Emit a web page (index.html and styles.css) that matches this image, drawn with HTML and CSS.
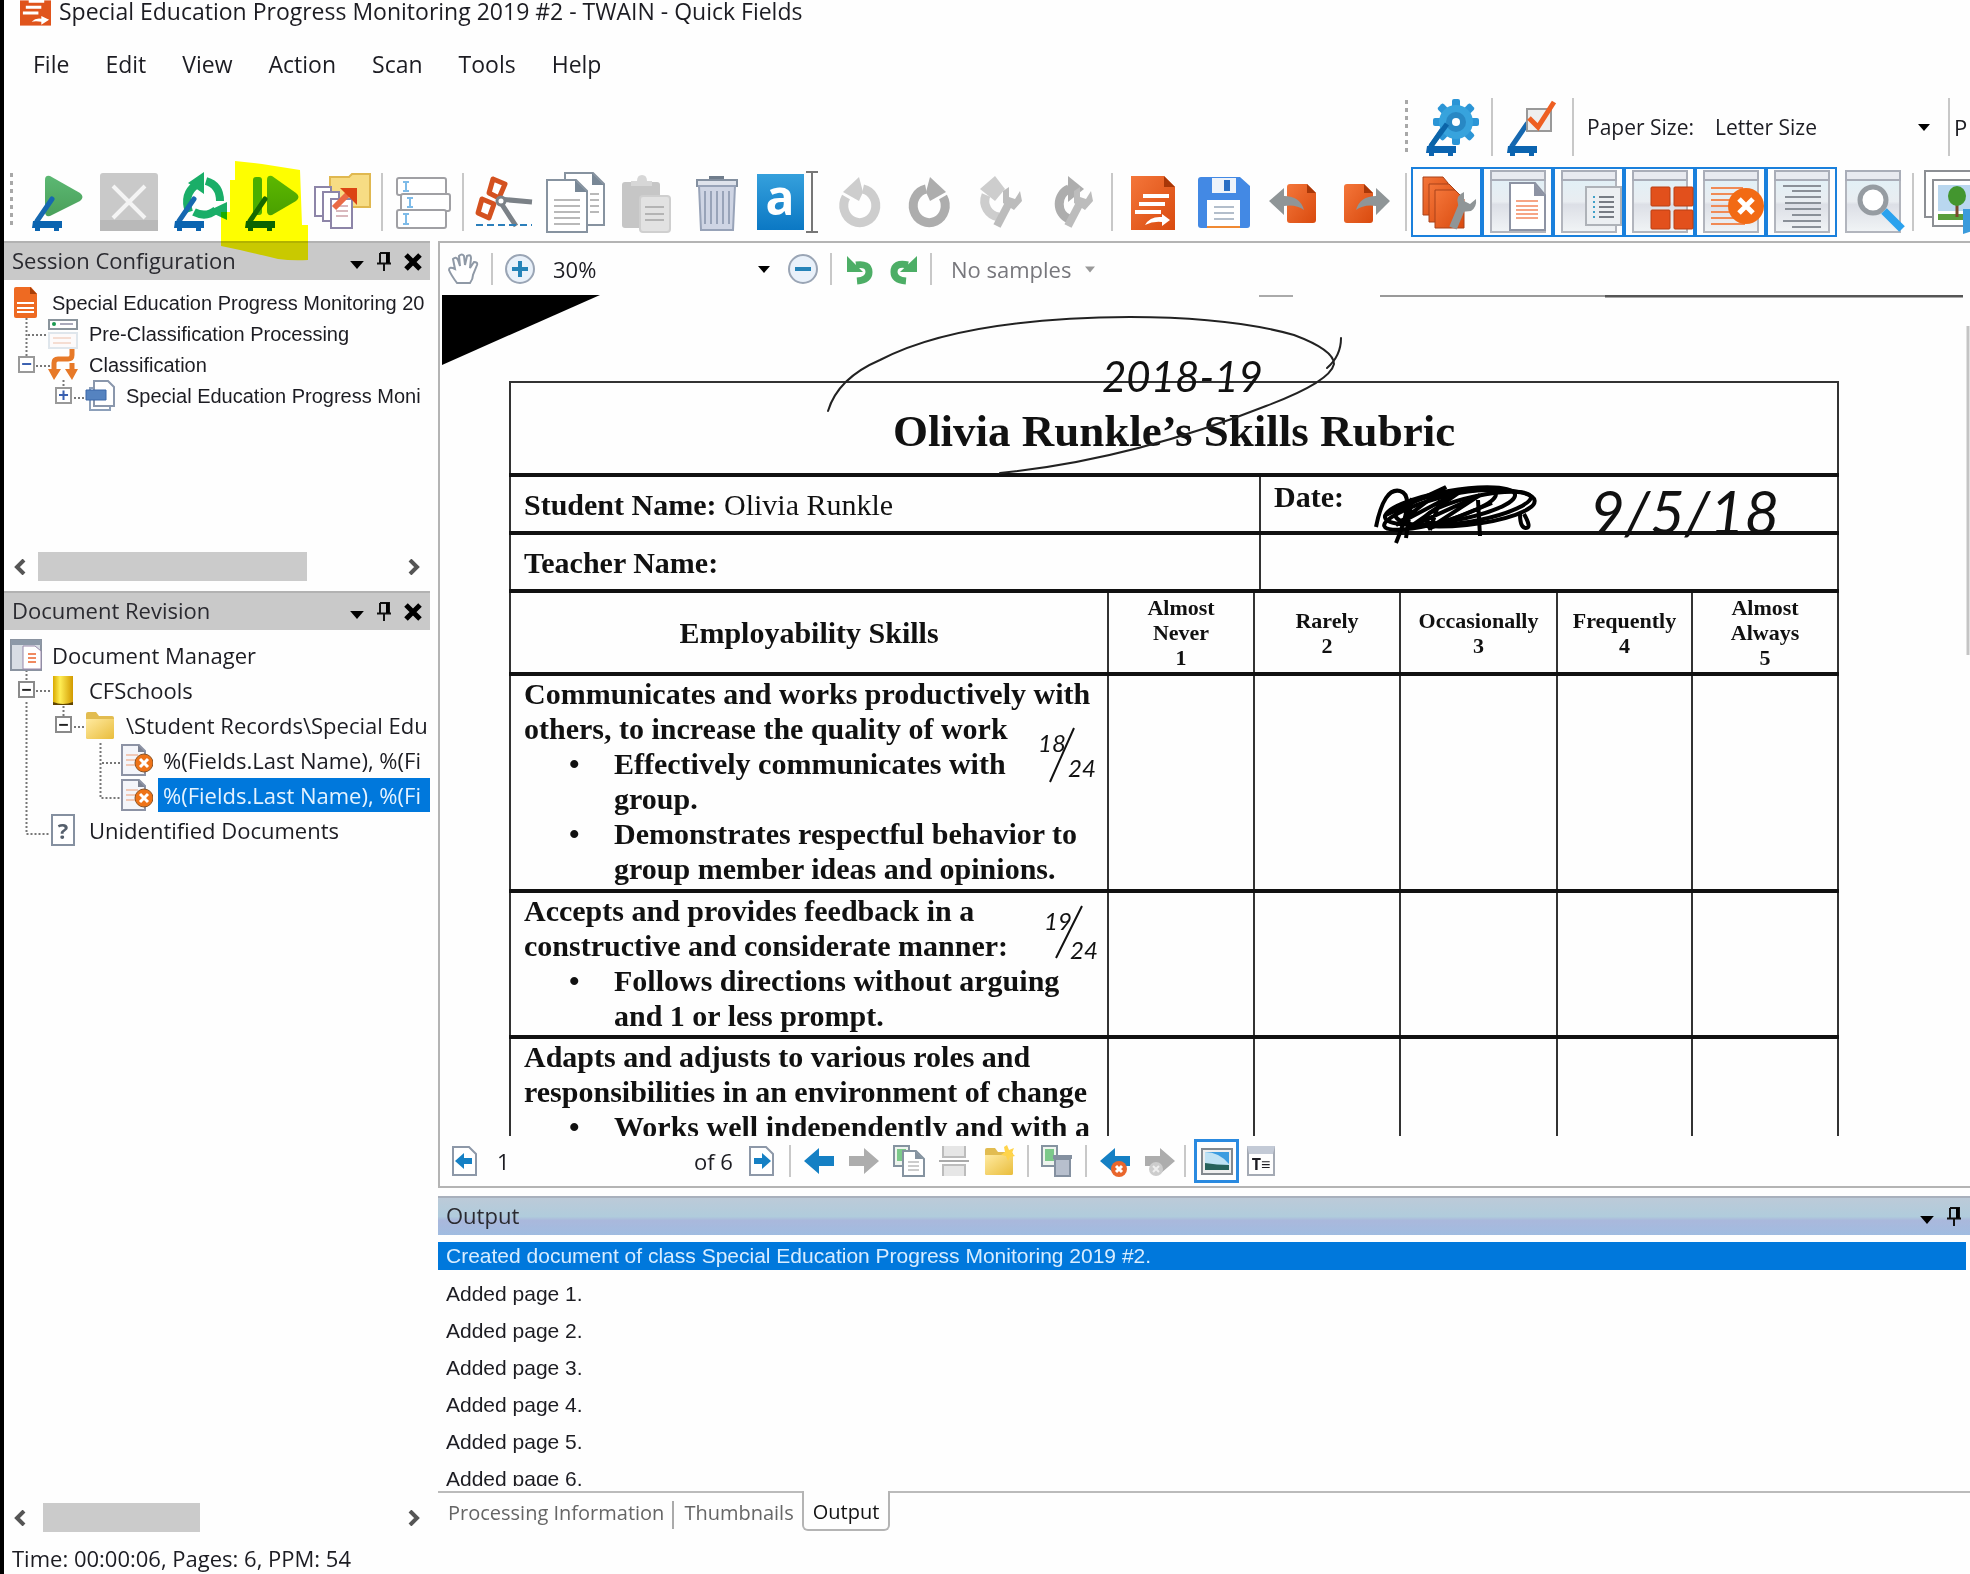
FILE: index.html
```html
<!DOCTYPE html>
<html lang="en">
<head>
<meta charset="utf-8">
<title>Special Education Progress Monitoring 2019 #2 - TWAIN - Quick Fields</title>
<link rel="stylesheet" href="styles.css">
</head>
<body>
<svg class="sprite" aria-hidden="true">
  <defs>
    <linearGradient id="gOrange" x1="0" y1="0" x2="1" y2="1"><stop offset="0" stop-color="#f4763a"/><stop offset="1" stop-color="#d94a0e"/></linearGradient>
    <linearGradient id="gPlay" x1="0" y1="0" x2="0" y2="1"><stop offset="0" stop-color="#5cb873"/><stop offset="1" stop-color="#4aa05a"/></linearGradient>
    <linearGradient id="gPane" x1="0" y1="0" x2="0" y2="1"><stop offset="0" stop-color="#dff1f8"/><stop offset=".5" stop-color="#e9edf1"/><stop offset=".55" stop-color="#dcdfe6"/><stop offset="1" stop-color="#f1f4f6"/></linearGradient>
    <linearGradient id="gFolder" x1="0" y1="0" x2="1" y2="1"><stop offset="0" stop-color="#ffeaa0"/><stop offset="1" stop-color="#e9bd3c"/></linearGradient>
    <linearGradient id="gGold" x1="0" y1="0" x2="1" y2="0"><stop offset="0" stop-color="#d9a900"/><stop offset=".35" stop-color="#ffee55"/><stop offset="1" stop-color="#d29a00"/></linearGradient>
  </defs>
  <symbol id="scanner" viewBox="0 0 60 60"><path d="M9 49 24 27" stroke="#1668b0" stroke-width="5" fill="none" stroke-linecap="round"/><path d="M5 49h29v7h-3v3h-5v-3H12v3H7v-3H4z" fill="#0b64b0"/></symbol>
  <symbol id="window" viewBox="0 0 60 66"><rect x="3" y="2" width="54" height="61" fill="url(#gPane)" stroke="#b2b5bd" stroke-width="2"/><rect x="3" y="2" width="54" height="9" fill="#e8eaf0" stroke="#a9adb8" stroke-width="2"/></symbol>
  <symbol id="caret" viewBox="0 0 12 7"><path d="M0 0h12L6 7z"/></symbol>
  <symbol id="pin" viewBox="0 0 16 20"><path d="M4 1h9v10M4 1v10M1 11.500h14M8 12v7" fill="none" stroke="#111" stroke-width="2"/><path d="M10 1h3v10h-3z"/></symbol>
  <symbol id="cross" viewBox="0 0 18 18"><path d="M2 2l14 14M16 2 2 16" stroke="#000" stroke-width="5"/></symbol>
  <symbol id="left" viewBox="0 0 12 16"><path d="M10 1 3 8l7 7" fill="none" stroke="#555" stroke-width="4"/></symbol>
  <symbol id="right" viewBox="0 0 12 16"><path d="M2 1l7 7-7 7" fill="none" stroke="#555" stroke-width="4"/></symbol>
  <symbol id="folder" viewBox="0 0 32 32"><path d="M2 5q0-2 2-2h8l3 4h13q2 0 2 2v19q0 2-2 2H4q-2 0-2-2z" fill="#e2bc50"/><path d="M2 10h28v18q0 2-2 2H4q-2 0-2-2z" fill="url(#gFolder)"/></symbol>
  <symbol id="rot" viewBox="0 0 60 60"><path d="M43 25a16 17 0 1 1-17-8" fill="none" stroke="currentColor" stroke-width="9"/><path d="M30 5 46 20 30 29 26 20z" fill="currentColor"/></symbol>
  <symbol id="baddoc" viewBox="0 0 32 32"><path d="M1 1h17l6 6v24H1z" fill="#f4f5fa" stroke="#8d93a5" stroke-width="2"/><path d="M17 1v7h7z" fill="#7c8292"/><path d="M5 11h12M5 16h10M5 21h9" stroke="#efb9a0" stroke-width="1.500"/><circle cx="23" cy="19" r="9" fill="#ee7318" stroke="#8c5424"/><path d="M19 15l8 8M27 15l-8 8" stroke="#fff" stroke-width="3"/></symbol>
  <symbol id="pages" viewBox="0 0 32 32"><path d="M1 1h15v20H1z" fill="#eef4ee" stroke="#8593a0" stroke-width="2"/><path d="M4 4h9v12H4z" fill="#7cc98a"/></symbol>
  <symbol id="bigleft" viewBox="0 0 32 32"><path d="M1 16 16 3v8h15v10H16v8z" fill="currentColor"/></symbol>
</svg>

<div class="app">
  <header class="titlebar">
    <svg class="logo" viewBox="0 0 32 26"><path d="M0 0h32v26H0z" fill="#e0541c"/><path d="M9 1h16M6 7h16M3 13h16" stroke="#fff" stroke-width="3"/><path d="M12 22q4-4 10-3v-3l8 4-8 5v-3q-6-1-10-0" fill="#fff"/></svg>
    <span>Special Education Progress Monitoring 2019 #2 - TWAIN - Quick Fields</span>
  </header>
  <nav class="menu">
    <button>File</button><button>Edit</button><button>View</button><button>Action</button><button>Scan</button><button>Tools</button><button>Help</button>
  </nav>

  <div class="bar bar-scan">
    <span class="grip"></span>
    <button class="tool" aria-label="Scanner settings"><svg viewBox="0 0 60 60"><use href="#scanner"/><g transform="translate(34 25)"><g fill="#2b95d6"><rect x="-4" y="-23" width="8" height="46" rx="2"/><rect x="-23" y="-4" width="46" height="8" rx="2"/><rect x="-4" y="-23" width="8" height="46" rx="2" transform="rotate(45)"/><rect x="-4" y="-23" width="8" height="46" rx="2" transform="rotate(-45)"/></g><circle r="17" fill="#37a3dd"/><circle r="10" fill="#2888c4"/><circle r="4" fill="#fff"/></g><path d="M9 49 25 27" stroke="#0b64a8" stroke-width="5"/></svg></button>
    <span class="sep"></span>
    <button class="tool" aria-label="Test scan"><svg viewBox="0 0 60 60"><use href="#scanner"/><path d="M24 12h24v22H24z" fill="#eee" stroke="#999" stroke-width="2"/><path d="M26 21l9 9L51 5" fill="none" stroke="#ee5f22" stroke-width="5"/></svg></button>
    <span class="sep"></span>
    <label class="paper-label" for="paper">Paper Size:</label>
    <span class="pick paper"><select id="paper"><option>Letter Size</option></select><svg class="caret"><use href="#caret"/></svg></span>
    <span class="sep"></span>
    <span>P</span>
  </div>

  <div class="bar bar-main">
    <span class="grip"></span>
    <button class="tool" aria-label="Start"><svg viewBox="0 0 60 60"><path d="M17 8q0-5 5-4l30 17q5 4 0 8L22 44q-5 1-5-4z" fill="url(#gPlay)"/><use href="#scanner"/></svg></button>
    <button class="tool" aria-label="Stop"><svg viewBox="0 0 60 60"><rect x="1" y="1" width="58" height="58" rx="3" fill="#c9c9c9"/><path d="M1 48h58v11H1z" fill="#b9b9b9"/><path d="M14 14l32 32M46 14 14 46" stroke="#f4f4f4" stroke-width="4"/></svg></button>
    <button class="tool" aria-label="Rescan"><svg viewBox="0 0 60 60"><g fill="none" stroke="#1aae68" stroke-width="8"><path d="M19 40q-6-18 7-27"/><path d="M36 9q14 4 14 20"/><path d="M24 40q12 6 22-2"/></g><path d="M18 11 34 0v22zM57 30v18l-19-9z" fill="#1aae68"/><use href="#scanner"/></svg></button>
    <button class="tool" aria-label="Scan more"><svg viewBox="0 0 60 60"><rect x="12" y="5" width="9" height="38" rx="3" fill="#4aae56"/><path d="M26 8q0-5 5-4l24 17q5 4 0 8L31 43q-5 1-5-4z" fill="url(#gPlay)"/><use href="#scanner"/></svg></button>
    <button class="tool" aria-label="Send documents"><svg viewBox="0 0 60 60"><path d="M18 5h19l3-3h18v33H18z" fill="#f7dc84" stroke="#e0b850" stroke-width="2"/><g fill="#fff" stroke="#8d85a8" stroke-width="2"><path d="M3 15h16v29H3z"/><path d="M11 20h16v29H11z"/><path d="M19 27h21v29H19z"/></g><path d="M24 34h12M24 39h12M24 44h12" stroke="#d9b8bd" stroke-width="2"/><path d="M22 36 36 22" stroke="#ea6a45" stroke-width="6"/><path d="M28 16h17v17z" fill="#dc4413"/></svg></button>
    <span class="sep"></span>
    <button class="tool" aria-label="Fields"><svg viewBox="0 0 60 60"><g fill="#fff" stroke="#a0a0a4" stroke-width="2"><rect x="4" y="6" width="49" height="17" rx="2"/><rect x="8" y="22" width="49" height="17" rx="2"/><rect x="4" y="38" width="49" height="18" rx="2"/></g><path d="M13 10v9M17 26v9M13 42v10M10 10h6M10 19h6M14 26h6M14 35h6M10 42h6M10 52h6" stroke="#7ebbe8" stroke-width="2"/></svg></button>
    <span class="sep"></span>
    <button class="tool" aria-label="Cut"><svg viewBox="0 0 60 60"><path d="M24 27 58 30M27 31l15 23" stroke="#7b8187" stroke-width="5"/><g fill="#fff" stroke="#d4511f" stroke-width="5" stroke-linejoin="round"><path d="M19 7l12 5-6 14-10-5z"/><path d="M8 27l12 5-5 14-11-5z"/></g><circle cx="27" cy="29" r="4" fill="#fff" stroke="#7b8187" stroke-width="3"/><path d="M2 53h56" stroke="#2b7fbb" stroke-width="2" stroke-dasharray="7 4"/></svg></button>
    <button class="tool" aria-label="Copy"><svg viewBox="0 0 60 60"><g fill="#fff" stroke="#8793a0" stroke-width="2"><path d="M20 1h28l11 11v41H20z"/><path d="M2 8h29l11 11v41H2z"/></g><path d="M47 1v12h12zM30 8v12h12z" fill="#788796"/><path d="M9 28h26M9 34h26M9 40h26M9 46h26M9 52h26M45 22h9M45 28h9M45 34h9M45 40h9" stroke="#b9b9b9" stroke-width="2"/></svg></button>
    <button class="tool" aria-label="Paste"><svg viewBox="0 0 60 60"><rect x="6" y="10" width="38" height="46" rx="3" fill="#c6c6c6"/><path d="M15 14V9h6q0-6 5-6t5 6h5v5z" fill="#d7d7d7"/><rect x="24" y="24" width="30" height="36" rx="3" fill="#e2e2e2" stroke="#cfcfcf" stroke-width="2"/><path d="M29 35h19M29 42h19M29 48h19" stroke="#b4b4b4" stroke-width="2"/></svg></button>
    <button class="tool" aria-label="Delete"><svg viewBox="0 0 60 60"><path d="M22 4h15v4H22z" fill="#707d8c"/><path d="M10 8h40v6H10z" fill="#dfe3ec" stroke="#8490a0" stroke-width="2"/><path d="M12 14h36l-2 44H14z" fill="#cfd5e4" stroke="#98a3b8" stroke-width="2"/><path d="M18 19v33M24 19v33M30 19v33M36 19v33M42 19v33" stroke="#98a3b8" stroke-width="2"/></svg></button>
    <button class="tool" aria-label="Text field"><span class="letter-icon"><b>a</b><svg viewBox="0 0 14 62"><path d="M1 1h12M1 61h12M7 1v60" fill="none" stroke="#777" stroke-width="2"/></svg></span></button>
    <button class="tool light" aria-label="Rotate left"><svg viewBox="0 0 60 60"><use href="#rot" transform="matrix(-1 0 0 1 60 0)"/></svg></button>
    <button class="tool mid" aria-label="Rotate right"><svg viewBox="0 0 60 60"><use href="#rot"/></svg></button>
    <button class="tool light" aria-label="Rotate left settings"><svg viewBox="0 0 60 60"><path d="M28 45A16 16 0 0 1 15 23" fill="none" stroke="currentColor" stroke-width="9"/><path d="M9 17 24 4l10 13-10 12z" fill="currentColor"/><path d="M26 54 38 31" stroke="#bcbcbc" stroke-width="8"/><path d="M32 31V19l6-4v10l6 2 5-8 2 10-8 9z" fill="#bcbcbc"/></svg></button>
    <button class="tool mid" aria-label="Rotate right settings"><svg viewBox="0 0 60 60"><path d="M27 47a15 16 0 0 1 0-30" fill="none" stroke="currentColor" stroke-width="9"/><path d="M26 4l16 13-16 13z" fill="currentColor"/><path d="M26 54 38 31" stroke="#bcbcbc" stroke-width="8"/><path d="M32 31V19l6-4v10l6 2 5-8 2 10-8 9z" fill="#bcbcbc"/></svg></button>
    <span class="sep"></span>
    <button class="tool" aria-label="New session"><svg viewBox="0 0 60 60"><path d="M8 4h33l11 11v43H8z" fill="url(#gOrange)"/><path d="M41 4v11h11z" fill="#a83708"/><path d="M20 24h26M16 32h26M12 40h26" stroke="#fff" stroke-width="4"/><path d="M22 53q5-9 17-8v-3l8 6-8 6v-4q-9-1-17 3" fill="#fff"/></svg></button>
    <button class="tool" aria-label="Save"><svg viewBox="0 0 60 60"><path d="M4 8q0-3 3-3h39l10 9v39q0 3-3 3H7q-3 0-3-3z" fill="#4389e4"/><path d="M18 6h24v15H18z" fill="#eef3fa"/><path d="M30 8h6v11h-6z" fill="#2b6fc4"/><path d="M13 28h33v28H13z" fill="#fff"/><path d="M13 55h33" stroke="#f08a33" stroke-width="2"/><path d="M20 35h20M20 41h20M20 47h20" stroke="#9aa9ba" stroke-width="1.500"/></svg></button>
    <button class="tool" aria-label="Previous document"><svg viewBox="0 0 60 60"><path d="M22 15q0-3 3-3h17l9 9v27q0 3-3 3H25q-3 0-3-3z" fill="url(#gOrange)"/><path d="M42 12v9h9z" fill="#a83708"/><path d="M4 29 19 16v8q16 0 20 14-8-6-20-4v9z" fill="#8f9597"/></svg></button>
    <button class="tool" aria-label="Next document"><svg viewBox="0 0 60 60"><path d="M8 15q0-3 3-3h17l9 9v27q0 3-3 3H11q-3 0-3-3z" fill="url(#gOrange)"/><path d="M28 12v9h9z" fill="#a83708"/><path d="M54 29 40 16v8q-16 0-20 14 8-6 20-4v9z" fill="#8f9597"/></svg></button>
    <span class="sep"></span>
    <button class="tool on" aria-label="Session pane"><svg viewBox="0 0 60 60"><g fill="url(#gOrange)" stroke="#a8431a"><path d="M6 5h20l5 6v32H6z"/><path d="M12 12h20l6 6v32H12z"/><path d="M18 18h20l9 9v29H18z"/></g><path d="M36 56 46 32" stroke="#8f9597" stroke-width="8"/><path d="M41 32q-3-8 6-12v9l6 3 6-5q1 8-5 12l-10 1z" fill="#8f9597"/></svg></button>
    <button class="tool tall on" aria-label="Document pane"><svg viewBox="0 0 60 66"><use href="#window"/><path d="M22 14h25l10 12v35H22z" fill="#fff" stroke="#8d93a3" stroke-width="2"/><path d="M46 14v13h11z" fill="#8d93a3"/><path d="M28 32h22M28 37h22M28 41h22M28 45h22M28 49h22" stroke="#f6a585" stroke-width="2"/></svg></button>
    <button class="tool tall on" aria-label="Fields pane"><svg viewBox="0 0 60 66"><use href="#window"/><path d="M27 18h35v38H27z" fill="#eceff2" stroke="#aeb2b8" stroke-width="2"/><path d="M40 28h15M40 33h15M40 38h15M40 43h15M40 48h15" stroke="#777c84" stroke-width="2"/><path d="M35 27v22" stroke="#3fa0c8" stroke-width="2" stroke-dasharray="2 3"/></svg></button>
    <button class="tool tall on" aria-label="Thumbnails pane"><svg viewBox="0 0 60 66"><use href="#window"/><g fill="#e2501c" stroke="#b93f12"><rect x="21" y="18" width="19" height="19" rx="1"/><rect x="44" y="18" width="19" height="19" rx="1"/><rect x="21" y="41" width="19" height="19" rx="1"/><rect x="44" y="41" width="19" height="19" rx="1"/></g></svg></button>
    <button class="tool tall on" aria-label="Errors pane"><svg viewBox="0 0 60 66"><use href="#window"/><path d="M10 19h32M10 25h30M10 31h26M10 37h25M10 43h26M10 49h30M10 55h34" stroke="#f08a55" stroke-width="2"/><circle cx="45" cy="37" r="18" fill="#f26a14"/><path d="M38 30l14 14M52 30 38 44" stroke="#fff" stroke-width="5"/></svg></button>
    <button class="tool tall on" aria-label="Output pane"><svg viewBox="0 0 60 66"><use href="#window"/><path d="M11 17h38M20 22h29M13 28h36M13 34h36M13 40h36M20 46h29M11 52h38M20 58h29" stroke="#8a9098" stroke-width="2"/></svg></button>
    <button class="tool tall" aria-label="Search pane"><svg viewBox="0 0 60 66"><use href="#window"/><circle cx="30" cy="31" r="13" fill="#fff" stroke="#969ca2" stroke-width="5"/><path d="M41 42 59 60" stroke="#2ba2ee" stroke-width="8"/></svg></button>
    <span class="sep"></span>
    <button class="tool tall" aria-label="Image pane"><svg viewBox="0 0 60 66"><path d="M1 2h46v46H1z" fill="#fff" stroke="#8c8f94" stroke-width="2"/><path d="M9 11h46v46H9z" fill="#fff" stroke="#8c8f94" stroke-width="2"/><path d="M14 16h40v26H14z" fill="#b9d7ef"/><path d="M14 45h34v6H14z" fill="#5a9e3c"/><path d="M33 34v14" stroke="#7a4a2c" stroke-width="3"/><ellipse cx="33" cy="27" rx="9" ry="10" fill="#43962f"/><path d="M39 40h12v21l-12 4z" fill="#3b9bdc"/></svg></button>
  </div>

  <svg class="marker" viewBox="221 160 88 101" aria-hidden="true"><path d="M235 161l27 3 38 6 2 55h6v35q-16 1-30-1-16-4-38-9l-19-4v-34h9v-32h5z" fill="#ffff00"/></svg>

  <main class="work">
    <div class="side">
      <section class="panel session">
        <header class="panel-head"><h2>Session Configuration</h2><button aria-label="Menu"><svg class="i-caret"><use href="#caret"/></svg></button><button aria-label="Pin"><svg class="i-pin"><use href="#pin"/></svg></button><button aria-label="Close"><svg class="i-cross"><use href="#cross"/></svg></button></header>
        <div class="tree-wrap">
          <svg class="lines" width="200" height="140" viewBox="4 280 200 140"><path d="M26.500 318v40M28 335h20M36 366h14M63.500 380v10M74 398h14"/></svg>
          <ul class="tree classic">
            <li><svg class="ic" viewBox="0 0 32 32"><path d="M4 2q0-2 2-2h15l6 7v22q0 2-2 2H6q-2 0-2-2z" fill="#ee6a22"/><path d="M20 0v7h7z" fill="#a83f08"/><path d="M7 16h17M7 21h17M7 25h17" stroke="#fff" stroke-width="2"/></svg><span>Special Education Progress Monitoring 20</span></li>
            <li class="l1"><i></i><svg class="ic" viewBox="0 0 32 32"><path d="M2 2h28v9H2z" fill="#fff" stroke="#8a949c" stroke-width="2"/><circle cx="7" cy="6" r="2" fill="#1a9a50"/><path d="M13 6h13" stroke="#aab" stroke-width="2"/><path d="M2 15h28v15H2z" fill="#fdfafa" stroke="#dfe6ec" stroke-width="2"/><path d="M6 20h18M6 25h18" stroke="#f5ddd2" stroke-width="2"/></svg><span>Pre-Classification Processing</span></li>
            <li class="l1"><button class="box blue" aria-label="Collapse">−</button><svg class="ic" viewBox="0 0 32 32"><path d="M25 0v6q0 4-4 4H11q-4 0-4 4v6M25 14v6" fill="none" stroke="#e77928" stroke-width="5"/><path d="M1 20h13L7 31zM18 20h13l-6 11z" fill="#e77928"/></svg><span>Classification</span></li>
            <li class="l2"><button class="box blue" aria-label="Expand">+</button><svg class="ic" viewBox="0 0 32 32"><path d="M6 8h20v22H6z" fill="#fff" stroke="#8da0ba" stroke-width="2"/><path d="M10 1h14l6 6v19H10z" fill="#fff" stroke="#8a97ac" stroke-width="2"/><path d="M2 10h20v10H2z" fill="#5583c0" stroke="#3a67a8"/></svg><span>Special Education Progress Moni</span></li>
          </ul>
        </div>
        <div class="scroll"><svg><use href="#left"/></svg><b></b><svg><use href="#right"/></svg></div>
      </section>
      <section class="panel revision">
        <header class="panel-head"><h2>Document Revision</h2><button aria-label="Menu"><svg class="i-caret"><use href="#caret"/></svg></button><button aria-label="Pin"><svg class="i-pin"><use href="#pin"/></svg></button><button aria-label="Close"><svg class="i-cross"><use href="#cross"/></svg></button></header>
        <div class="tree-wrap">
          <svg class="lines" width="200" height="220" viewBox="4 630 200 220"><path d="M26.500 670v12M26.500 702v132h22M36 691h14M63.500 706v12M74 727h12M100.500 743v55h22M102 763h20"/></svg>
          <ul class="tree">
            <li><svg class="ic" viewBox="0 0 32 32"><path d="M1 1h30v30H1z" fill="#d8dde4" stroke="#8a93a0" stroke-width="2"/><path d="M1 1h30v5H1z" fill="#8d99a8"/><path d="M13 7h12l6 5v18H13z" fill="#fff" stroke="#98a" stroke-width="1"/><path d="M18 15h8M18 19h8M18 23h8" stroke="#f08a60" stroke-width="2"/></svg><span>Document Manager</span></li>
            <li class="l1"><button class="box" aria-label="Collapse">−</button><svg class="ic" viewBox="0 0 32 32"><path d="M6 2h20v27q-10 4-20 0z" fill="url(#gGold)"/><path d="M6 28q10 4 20 0v3H6z" fill="#604400"/></svg><span>CFSchools</span></li>
            <li class="l2"><button class="box" aria-label="Collapse">−</button><svg class="ic"><use href="#folder"/></svg><span>\Student Records\Special Edu</span></li>
            <li class="l3"><i></i><svg class="ic"><use href="#baddoc"/></svg><span>%(Fields.Last Name), %(Fi</span></li>
            <li class="l3 sel"><i></i><svg class="ic"><use href="#baddoc"/></svg><span>%(Fields.Last Name), %(Fi</span></li>
            <li class="l1"><i></i><span class="ic unknown">?</span><span>Unidentified Documents</span></li>
          </ul>
        </div>
        <div class="scroll short"><svg><use href="#left"/></svg><b></b><svg><use href="#right"/></svg></div>
      </section>
    </div>

    <div class="center">
      <section class="viewer">
        <div class="strip">
          <button class="s" aria-label="Pan"><svg viewBox="0 0 32 32"><path d="M9 30Q3 22 1 17q0-4 6-1L5 6q3-3 5 1l2 6-1-10q3-3 5 0l1 9 2-9q4-2 4 2l-1 10 4-6q4 0 3 3l-4 10q0 4-3 8z" fill="#fff" stroke="#8f99a6" stroke-width="2"/></svg></button>
          <span class="sep"></span>
          <button class="s" aria-label="Zoom in"><svg viewBox="0 0 32 32"><circle cx="16" cy="16" r="14" fill="#e9f1fa" stroke="#9aa5b5" stroke-width="2"/><path d="M8 16h16M16 8v16" stroke="#2583b8" stroke-width="4"/></svg></button>
          <span class="pick zoom"><select aria-label="Zoom"><option>30%</option></select><svg class="caret"><use href="#caret"/></svg></span>
          <button class="s" aria-label="Zoom out"><svg viewBox="0 0 32 32"><circle cx="16" cy="16" r="14" fill="#e9f1fa" stroke="#9aa5b5" stroke-width="2"/><path d="M8 16h16" stroke="#2583b8" stroke-width="4"/></svg></button>
          <span class="sep"></span>
          <button class="s" aria-label="Undo"><svg viewBox="0 0 32 32"><path d="M13 12q13-2 13 7 0 8-12 9" fill="none" stroke="#4dae66" stroke-width="7"/><path d="M4 3v16h16z" fill="#4dae66"/></svg></button>
          <button class="s redo" aria-label="Redo"><svg viewBox="0 0 32 32"><path d="M21 12Q7 9 7 19q0 8 12 9" fill="none" stroke="#4dae66" stroke-width="7"/><path d="M30 3v16H13z" fill="#4dae66"/></svg></button>
          <span class="sep"></span>
          <button class="samples">No samples <svg class="caret"><use href="#caret"/></svg></button>
        </div>

        <div class="sheet">
          <table class="info">
            <colgroup><col class="c-name"><col class="c-date"></colgroup>
            <tr><th colspan="2" class="title">Olivia Runkle’s Skills Rubric</th></tr>
            <tr class="r1"><td><b>Student Name:</b> Olivia Runkle</td><td class="date"><b>Date:</b></td></tr>
            <tr class="r1"><td><b>Teacher Name:</b></td><td></td></tr>
          </table>
          <table class="rubric">
            <colgroup><col class="c-skill"><col class="c-a"><col class="c-a"><col class="c-b"><col class="c-c"><col class="c-a"></colgroup>
            <thead><tr><th class="skills">Employability Skills</th><th>Almost<br>Never<br>1</th><th>Rarely<br>2</th><th>Occasionally<br>3</th><th>Frequently<br>4</th><th>Almost<br>Always<br>5</th></tr></thead>
            <tbody>
              <tr class="r6"><td>Communicates and works productively with others, to increase the quality of work<ul><li>Effectively communicates with<br>group.</li><li>Demonstrates respectful behavior to<br>group member ideas and opinions.</li></ul></td><td></td><td></td><td></td><td></td><td></td></tr>
              <tr class="r4"><td>Accepts and provides feedback in a<br>constructive and considerate manner:<ul><li>Follows directions without arguing<br>and 1 or less prompt.</li></ul></td><td></td><td></td><td></td><td></td><td></td></tr>
              <tr class="r4"><td>Adapts and adjusts to various roles and responsibilities in an environment of change<ul><li>Works well independently and with a</li></ul></td><td></td><td></td><td></td><td></td><td></td></tr>
            </tbody>
          </table>
          <svg class="ink" width="1530" height="840" viewBox="440 295 1530 840">
            <path d="M442 295h158L442 365z" fill="#000"/>
            <path d="M1259 296h34" stroke="#aaa" stroke-width="2"/><path d="M1380 296h225" stroke="#999" stroke-width="2"/><path d="M1605 296h358" stroke="#555" stroke-width="3"/>
            <g fill="none" stroke="#222" stroke-width="2" stroke-linecap="round">
              <path d="M828 411Q838 378 880 360 960 318 1130 317 1230 317 1294 335 1334 350 1334 364 1330 382 1266 406 1130 460 1000 473"/>
              <path d="M1341 338q0 18-14 30"/>
            </g>
            <g fill="none" stroke="#000" stroke-width="4">
              <ellipse cx="1465" cy="508" rx="70" ry="17" transform="rotate(-6 1465 508)"/>
              <ellipse cx="1450" cy="506" rx="66" ry="15" transform="rotate(-10 1450 506)"/>
              <ellipse cx="1478" cy="508" rx="54" ry="12" transform="rotate(-12 1478 508)"/>
              <ellipse cx="1440" cy="510" rx="58" ry="12" transform="rotate(-16 1440 510)"/>
              <path d="M1376 527q8-40 24-36t-4 52M1386 515l60-28-50 38 68-36-54 38 70-32-52 34 64-26M1412 498l-6 40M1440 500l-10 30M1478 500l2 36M1524 514q8 14 2 14t-6-14"/>
            </g>
            <g class="pen">
              <text x="1102" y="392" font-size="42">2018-19</text>
              <text x="1590" y="534" font-size="60">9/5/18</text>
              <text x="1038" y="752" font-size="24">18</text><text x="1068" y="777" font-size="24">24</text>
              <text x="1044" y="930" font-size="24">19</text><text x="1070" y="959" font-size="24">24</text>
              <path d="M1074 728 1050 782M1082 906l-26 52" stroke="#111" stroke-width="2"/>
            </g>
            <path d="M1968 326v329" stroke="#c4c4c4" stroke-width="3"/>
          </svg>
        </div>

        <div class="strip pager">
          <button class="s" aria-label="Previous page"><svg viewBox="0 0 32 32"><path d="M5 2h16l7 7v21H5z" fill="#fff" stroke="#8d98a8" stroke-width="2"/><path d="M7 16l9-8v5h8v6h-8v5z" fill="#1580c4"/></svg></button>
          <input class="page" aria-label="Page" value="1">
          <span class="of">of 6</span>
          <button class="s" aria-label="Next page"><svg viewBox="0 0 32 32"><path d="M5 2h16l7 7v21H5z" fill="#fff" stroke="#8d98a8" stroke-width="2"/><path d="M26 16l-9-8v5H9v6h8v5z" fill="#1580c4"/></svg></button>
          <span class="sep"></span>
          <button class="s g blue" aria-label="Back"><svg><use href="#bigleft"/></svg></button>
          <button class="s g mid" aria-label="Forward"><svg viewBox="0 0 32 32"><path d="M31 16 16 3v8H1v10h15v8z" fill="currentColor"/></svg></button>
          <button class="s g" aria-label="Copy pages"><svg viewBox="0 0 32 32"><use href="#pages"/><path d="M10 6h13l8 8v17H10z" fill="#fff" stroke="#8593a0" stroke-width="2"/><path d="M22 6v8h8z" fill="#8593a0"/><path d="M15 17h11M15 21h11M15 25h11" stroke="#ccc" stroke-width="2"/></svg></button>
          <button class="s g" aria-label="Split"><svg viewBox="0 0 32 32"><path d="M5 1v11h22V1M5 31V20h22v11" fill="#e6e6e6" stroke="#bcbcbc" stroke-width="2"/><path d="M1 16h30" stroke="#aaa" stroke-width="2"/></svg></button>
          <button class="s g" aria-label="New folder"><svg viewBox="0 0 32 32"><use href="#folder"/><path d="M24 0l2 5 5-2-2 5 3 3-5 1-2 4-2-5-5-1 4-3-1-5z" fill="#ffd44a"/></svg></button>
          <span class="sep"></span>
          <button class="s" aria-label="Delete page"><svg viewBox="0 0 32 32"><use href="#pages"/><path d="M12 10h19v4H12z" fill="#8490a0"/><path d="M14 14h15v17H14z" fill="#b7bfcd" stroke="#8490a0" stroke-width="2"/></svg></button>
          <span class="sep"></span>
          <button class="s blue" aria-label="Reject back"><svg viewBox="0 0 32 32"><use href="#bigleft"/><circle cx="20" cy="24" r="8" fill="#e9662c"/><path d="M17 21l6 6M23 21l-6 6" stroke="#fff" stroke-width="3"/></svg></button>
          <button class="s r mid" aria-label="Reject forward"><svg viewBox="0 0 32 32"><path d="M31 16 16 3v8H1v10h15v8z" fill="currentColor"/><circle cx="12" cy="24" r="7" fill="#ccc"/><path d="M9 21l6 6M15 21l-6 6" stroke="#eee" stroke-width="2"/></svg></button>
          <span class="sep tight"></span>
          <button class="s boxed" aria-label="Image view"><svg viewBox="0 0 32 32"><path d="M1 4h30v25H1z" fill="#eee" stroke="#83898f" stroke-width="2"/><path d="M4 7h24v18H4z" fill="#3b9ce0"/><path d="M4 7q14 0 24 12v6H4z" fill="#bfe2f4"/><path d="M4 18q12 2 24 2v5H4z" fill="#27625c"/></svg></button>
          <button class="s t" aria-label="Text view"><span class="text-icon"><b>T≡</b></span></button>
        </div>
      </section>

      <section class="output">
        <header class="panel-head out-head"><h2>Output</h2><button aria-label="Menu"><svg class="i-caret"><use href="#caret"/></svg></button><button aria-label="Pin"><svg class="i-pin"><use href="#pin"/></svg></button></header>
        <ul class="log">
          <li class="sel">Created document of class Special Education Progress Monitoring 2019 #2.</li>
          <li>Added page 1.</li><li>Added page 2.</li><li>Added page 3.</li><li>Added page 4.</li><li>Added page 5.</li><li>Added page 6.</li>
        </ul>
        <div class="tabs"><button>Processing Information</button><button>Thumbnails</button><button class="active">Output</button><span class="rest"></span></div>
      </section>
    </div>
  </main>
  <footer class="status">Time: 00:00:06, Pages: 6, PPM: 54</footer>
</div>
</body>
</html>
```
FILE: styles.css
```css
* { box-sizing: border-box; }
body {
  margin: 0;
  background: #fefefe;
  color: #1c1c22;
  font-family: "Open Sans", "Noto Sans", sans-serif;
  font-size: 22px;
  line-height: 32px;
}
button, select, input { font: inherit; color: inherit; background: none; border: 0; padding: 0; margin: 0; }
ul { list-style: none; margin: 0; padding: 0; }
h2 { font: inherit; margin: 0; }
svg { display: block; }
.sprite { position: absolute; width: 0; height: 0; }

.app { position: relative; height: 100vh; min-height: 1200px; display: flex; flex-direction: column; overflow: hidden; border-left: 4px solid #000; white-space: nowrap; }
.titlebar { display: flex; gap: 8px; height: 38px; padding-left: 16px; line-height: 22px; flex: none; font-size: 23px; }
.logo { width: 31px; height: 26px; }
.menu { display: flex; gap: 36px; height: 60px; padding: 10px 0 0 29px; align-items: flex-start; flex: none; font-size: 23px; }

/* toolbars */
.bar { display: flex; align-items: center; flex: none; overflow: hidden; }
.bar > * { flex: none; }
.bar-scan { height: 58px; padding-left: calc(100% - 568px); margin-bottom: 11px; }
.bar-main { height: 74px; align-items: flex-start; }
.grip { width: 3px; height: 54px; margin: 0 8px 0 3px; background: repeating-linear-gradient(#a8a8a8 0 4px, transparent 4px 8px); }
.bar-main .grip { margin: 6px 9px 0 6px; }
.sep { width: 10px; height: 58px; background: linear-gradient(#c8c8c8, #c8c8c8) center / 2px 100% no-repeat; flex: none; }
.bar-main .sep { margin-top: 6px; }
.tool { width: 71px; height: 70px; display: flex; align-items: center; justify-content: center; }
.tool svg { width: 60px; height: 60px; overflow: visible; }
.tool.tall svg { height: 66px; }
.tool.on { border: 2px solid #1a80dc; }
.light { color: #cdcdcd; }
.mid { color: #adadad; }
.blue { color: #1580c4; }
.letter-icon { display: flex; align-items: center; gap: 1px; }
.letter-icon b { width: 47px; height: 56px; background: linear-gradient(#35a0dc, #0b78c4); color: #fff; font-size: 48px; line-height: 46px; text-align: center; }
.letter-icon svg { width: 14px; height: 62px; }
.paper-label { margin: 0 21px 0 9px; font-size: 21px; }
.pick { display: flex; align-items: center; }
.pick select { appearance: none; flex: 1; }
.caret { width: 12px; height: 7px; }
.paper { width: 215px; margin-right: 14px; font-size: 21px; }
.marker { position: absolute; left: 217px; top: 160px; width: 88px; height: 101px; mix-blend-mode: multiply; z-index: 2; }

/* work area */
.work { flex: 1; min-height: 0; display: grid; grid-template-columns: 426px minmax(0, 1fr); gap: 8px; }
.side, .center { display: flex; flex-direction: column; min-height: 0; }
.panel { display: flex; flex-direction: column; }
.session { height: 350px; flex: none; }
.revision { flex: 1; min-height: 0; }
.panel-head { display: flex; align-items: center; height: 39px; flex: none; padding: 0 8px; background: #c9c9c9; border-top: 2px solid #b2b2b2; color: #2a2a30; }
.panel-head h2 { flex: 1; height: 35px; line-height: 32px; }
.panel-head button { margin-left: 12px; }
.i-caret { width: 14px; height: 8px; margin-top: 6px; }
.i-pin { width: 16px; height: 20px; }
.i-cross { width: 18px; height: 18px; }
.tree-wrap { position: relative; flex: 1; overflow: hidden; padding-top: 7px; }
.lines { position: absolute; left: 0; top: 0; }
.lines path { fill: none; stroke: #777; stroke-width: 2; stroke-dasharray: 2 2; }
.tree { position: relative; }
.tree li { display: flex; align-items: center; height: 35px; padding-left: 6px; overflow: hidden; }
.tree li.l1 { padding-left: 14px; }
.tree li.l2 { padding-left: 51px; }
.tree li.l3 { padding-left: 88px; }
.tree li > * { flex: none; }
.tree i { width: 29px; }
.tree .ic { width: 32px; height: 32px; }
.tree span:last-child { margin-left: 5px; padding-left: 5px; flex: 1 0 auto; line-height: 34px; }
.tree .sel span { background: #0078dc; color: #e4f3ff; }
.box { width: 17px; height: 17px; margin-right: 12px; border: 2px solid #8a8a8a; background: #fff; line-height: 11px; font-size: 18px; font-weight: 700; text-align: center; color: #222; }
.box.blue { color: #3a60b0; border-color: #999; }
.classic, .log { font-family: "Liberation Sans", Arial, sans-serif; font-size: 21px; }
.classic { font-size: 20px; }
.classic li { height: 31px; }
.classic span:last-child { line-height: 32px; }
.tree .unknown { width: 24px; margin: 0 4px; border: 2px solid #8590a0; background: #fff; color: #555f6c; font-weight: 700; line-height: 28px; text-align: center; }
.scroll { display: flex; align-items: center; height: 29px; margin: 0 10px; flex: none; }
.session .scroll { margin-bottom: 10px; }
.revision .scroll { margin-bottom: 9px; }
.scroll svg { width: 12px; height: 16px; }
.scroll b { width: 269px; height: 29px; margin: 0 auto 0 12px; background: #cbcbcb; }
.scroll.short b { width: 157px; margin-left: 17px; }

/* document viewer */
.viewer { flex: 1; min-height: 0; display: flex; flex-direction: column; border: 2px solid #b4b4b4; border-right: 0; }
.strip { display: flex; align-items: center; height: 52px; flex: none; padding-left: 8px; }
.strip > * { flex: none; }
.strip .sep { height: 32px; margin: 0 7px; }
.s { display: flex; align-items: center; justify-content: center; width: 32px; height: 44px; }
.s svg { width: 32px; height: 32px; }
.zoom { width: 217px; margin: 0 17px; }
.redo { margin-left: 12px; }
.samples { display: flex; align-items: center; gap: 14px; margin-left: 8px; color: #77777c; }
.samples .caret { fill: #999; width: 10px; height: 7px; }
.sheet { position: relative; flex: 1; min-height: 0; overflow: hidden; padding: 86px 133px 0 69px; color: #111; font-family: "Liberation Serif", "Times New Roman", serif; font-size: 30px; line-height: 35px; white-space: normal; }
.sheet table { width: 100%; table-layout: fixed; border-collapse: collapse; }
.sheet td, .sheet th { border: 2px solid #333; border-bottom: 4px solid #111; padding: 0 0 0 13px; }
.info .title { height: 93px; font-size: 45px; padding: 6px 0 0; }
.info .r1 td { height: 58px; }
.info .date { vertical-align: top; padding-top: 2px; }
.c-name { width: 750px; }
.c-date { width: 578px; }
.c-skill { width: 598px; }
.c-a { width: 146px; }
.c-b { width: 157px; }
.c-c { width: 135px; }
.rubric th { height: 81px; padding: 0; font-size: 22px; line-height: 25px; border-top: 0; }
.rubric th.skills { font-size: 30px; }
.rubric td { vertical-align: top; font-weight: 700; }
.rubric .r6 td { height: 217px; }
.rubric .r4 td { height: 146px; }
.rubric li { display: flex; padding-left: 45px; }
.rubric li::before { content: "•"; width: 45px; flex: none; }
.ink { position: absolute; left: 0; top: 0; }
.pen text { font-family: Lato, sans-serif; font-style: italic; fill: #111; }
.pager { height: 50px; }
.pager .page { width: 150px; margin-left: 17px; }
.pager .of { width: 51px; margin-left: 47px; }
.pager .sep { margin: 0 8px; }
.pager .sep.tight { margin: 0 4px; }
.pager .g + .g { margin-left: 13px; }
.r { margin-left: 13px; }
.boxed { width: 45px; height: 44px; border: 3px solid #2a8ae0; }
.t { margin-left: 6px; }
.text-icon { width: 28px; height: 30px; border: 2px solid #a4aab4; border-top: 8px solid #c3cad6; font-size: 16px; line-height: 20px; }

/* output panel */
.output { height: 345px; flex: none; margin-top: 8px; display: flex; flex-direction: column; }
.out-head { background: linear-gradient(#bccad8 0, #b0ccdc 50%, #aab8dc 60%, #a0bce0 100%); border-color: #a8b0bc; }
.log { height: 244px; overflow: hidden; margin: 7px 4px 0 0; }
.log li { line-height: 28px; margin-bottom: 9px; padding-left: 8px; }
.log .sel { background: #0078dc; color: #d8edff; margin-bottom: 10px; }
.tabs { display: flex; margin-top: 5px; font-size: 20px; color: #666; }
.tabs button { height: 40px; padding: 2px 10px 0; border-top: 2px solid #bbb; background: linear-gradient(#aaa, #aaa) right 8px / 2px 28px no-repeat; }
.tabs button:nth-child(2) { background: none; padding-right: 8px; }
.tabs .active { color: #111; border: 2px solid #b4b4b4; border-top: 0; border-radius: 0 0 6px 6px; background: none; padding: 4px 9px 0; }
.tabs .rest { flex: 1; border-top: 2px solid #bbb; }
.status { height: 33px; flex: none; padding-left: 8px; line-height: 34px; }
```
